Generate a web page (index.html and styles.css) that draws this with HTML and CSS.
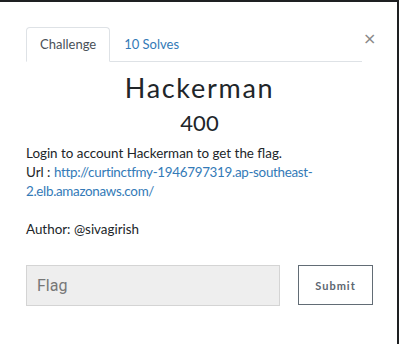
FILE: index.html
```html
<!DOCTYPE html>
<html lang="en">
<head>
  <meta charset="UTF-8">
  <title>Hackerman</title>
  <link rel="stylesheet" href="styles.css">
</head>
<body>
<div class="modal">
  <div class="modal-head">
    <ul class="tabs">
      <li class="tab active">Challenge</li>
      <li class="tab"><a href="#">10 Solves</a></li>
    </ul>
    <button class="close">&times;</button>
  </div>

  <h3 class="chal-name">Hackerman</h3>
  <h4 class="chal-value">400</h4>

  <div class="chal-desc">
    <p>Login to account Hackerman to get the flag.<br>
    Url : <a href="#">http://curtinctfmy-1946797319.ap-southeast-2.elb.amazonaws.com/</a></p>
    <p>Author: @sivagirish</p>
  </div>

  <form class="flag-form">
    <input class="flag-input" type="text" placeholder="Flag">
    <button class="submit" type="button">Submit</button>
  </form>
</div>
</body>
</html>
```

FILE: styles.css
```css
body {
  margin: 0;
  background-color: #1e2022;
  font-family: Lato, "Liberation Sans", sans-serif;
  color: #212529;
}

.modal {
  background-color: #fff;
  margin: 2px 2px 0 0;
  height: 342px;
  padding: 25px 24px 0 26px;
  box-sizing: border-box;
}

.modal-head {
  display: flex;
  align-items: flex-start;
}

.tabs {
  flex: 1;
  display: flex;
  list-style: none;
  margin: 0;
  padding: 0;
  border-bottom: 1px solid #dee2e6;
}

.tab {
  padding: 8px 13px;
  font-size: 13px;
  line-height: 17px;
  border: 1px solid transparent;
  border-radius: 4px 4px 0 0;
  margin-bottom: -1px;
}

.tab.active {
  color: #495057;
  border-color: #dee2e6 #dee2e6 #fff;
}

.tab a {
  color: #337ab7;
  text-decoration: none;
}

.close {
  background: none;
  border: none;
  padding: 0;
  margin: 4px 0 0 1px;
  width: 10px;
  font-size: 16px;
  line-height: 16px;
  color: #888;
  font-family: "DejaVu Sans", sans-serif;
}

.chal-name {
  text-align: center;
  font-weight: 400;
  font-size: 27px;
  letter-spacing: 1.7px;
  line-height: 32px;
  margin: 10px 0 0;
}

.chal-value {
  text-align: center;
  font-weight: 400;
  font-size: 22px;
  line-height: 26px;
  margin: 6px 0 0;
}

.chal-desc {
  font-size: 13.4px;
  line-height: 19px;
  margin-top: 8px;
}

.chal-desc p {
  margin: 0 0 19px;
}

.chal-desc a {
  color: #337ab7;
  text-decoration: none;
  letter-spacing: -0.3px;
}

.flag-form {
  display: flex;
  gap: 18px;
  margin-top: 26px;
}

.flag-input {
  width: 254px;
  height: 41px;
  box-sizing: border-box;
  background-color: #eee;
  border: 1px solid #d4d4d4;
  padding: 0 10px;
  font-family: Roboto, "Liberation Sans", sans-serif;
  font-size: 16px;
}

.flag-input::placeholder {
  color: #777;
}

.submit {
  width: 75px;
  height: 40px;
  background: #fff;
  border: 1px solid #626c75;
  color: #5c6670;
  font-family: Lato, sans-serif;
  font-weight: 700;
  font-size: 11px;
  letter-spacing: 1px;
}
```
